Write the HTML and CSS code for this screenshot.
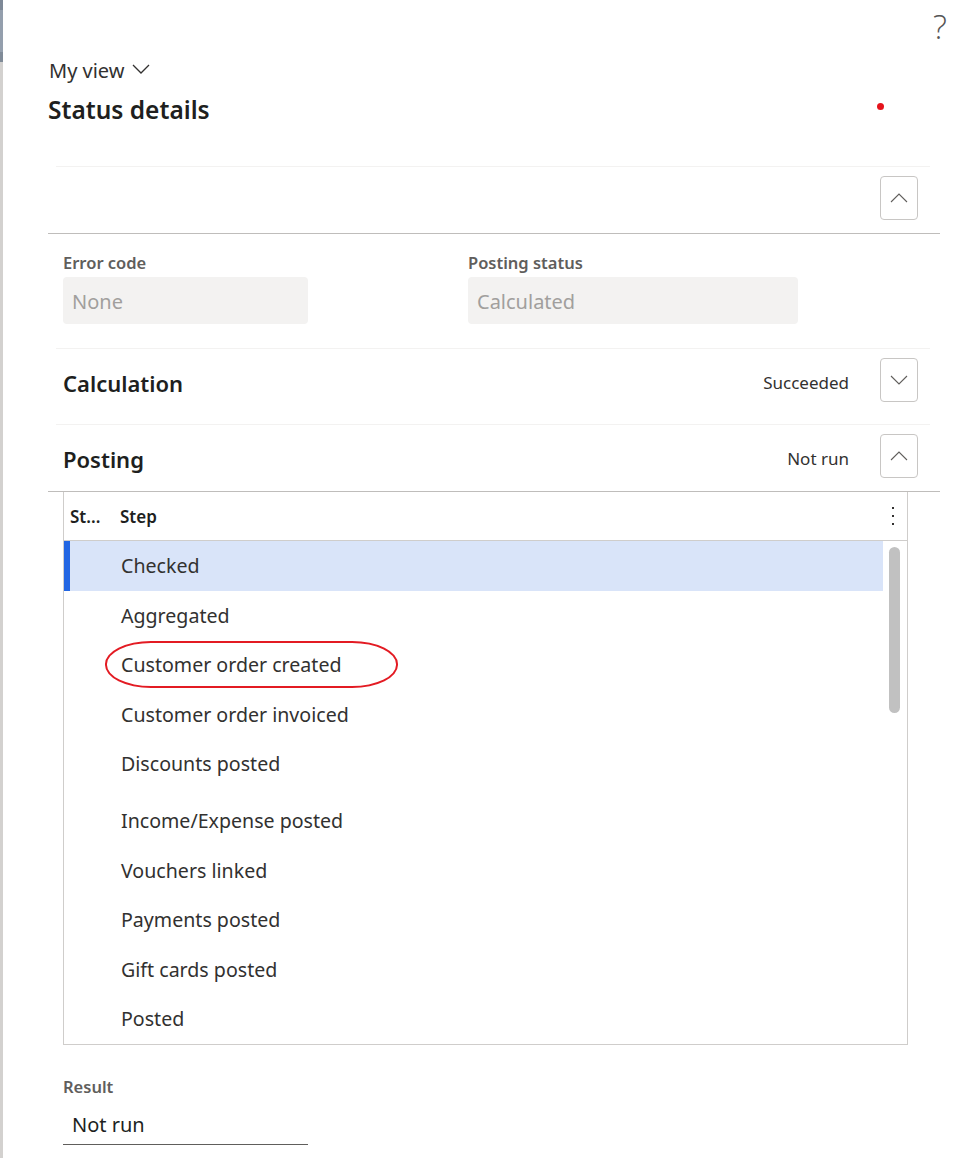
FILE: index.html
```html
<!DOCTYPE html>
<html lang="en">
<head>
<meta charset="utf-8">
<title>Status details</title>
<link rel="stylesheet" href="styles.css">
</head>
<body>
<div class="page">
  <div class="strip">
    <div class="strip-top"></div>
  </div>
  <main class="main">
    <div class="helprow"><span class="help">?</span></div>
    <div class="myview">My view
      <svg class="myview-chev" width="18" height="12" viewBox="0 0 18 12"><polyline points="1,2 9,10 17,2" fill="none" stroke="#323130" stroke-width="1.3"/></svg>
    </div>
    <div class="titlerow">
      <h1 class="title">Status details</h1>
      <span class="reddot"></span>
    </div>

    <div class="divider-light"></div>
    <div class="tabhead tabhead-open">
      <span class="tabtitle"></span>
      <button class="chevbtn"><svg width="18" height="12" viewBox="0 0 18 12"><polyline points="1,10 9,2 17,10" fill="none" stroke="#605e5c" stroke-width="1.1"/></svg></button>
    </div>
    <div class="divider-dark"></div>

    <div class="fields">
      <div class="field field-a">
        <div class="label">Error code</div>
        <div class="input">None</div>
      </div>
      <div class="field field-b">
        <div class="label">Posting status</div>
        <div class="input">Calculated</div>
      </div>
    </div>

    <div class="divider-light"></div>
    <div class="tabhead tabhead-closed">
      <span class="tabtitle">Calculation</span>
      <span class="tabstatus">Succeeded</span>
      <button class="chevbtn"><svg width="18" height="12" viewBox="0 0 18 12"><polyline points="1,2 9,10 17,2" fill="none" stroke="#605e5c" stroke-width="1.1"/></svg></button>
    </div>
    <div class="divider-light"></div>
    <div class="tabhead tabhead-open">
      <span class="tabtitle">Posting</span>
      <span class="tabstatus">Not run</span>
      <button class="chevbtn"><svg width="18" height="12" viewBox="0 0 18 12"><polyline points="1,10 9,2 17,10" fill="none" stroke="#605e5c" stroke-width="1.1"/></svg></button>
    </div>
    <div class="divider-dark"></div>

    <div class="grid">
      <div class="ghead">
        <span class="gcol-st">St...</span>
        <span class="gcol-step">Step</span>
        <span class="more"><i></i><i></i><i></i></span>
      </div>
      <div class="gbody">
        <div class="rows">
          <div class="row selected">Checked</div>
          <div class="row">Aggregated</div>
          <div class="row annotated">Customer order created<span class="ring"></span></div>
          <div class="row">Customer order invoiced</div>
          <div class="row gap-after">Discounts posted</div>
          <div class="row">Income/Expense posted</div>
          <div class="row">Vouchers linked</div>
          <div class="row">Payments posted</div>
          <div class="row">Gift cards posted</div>
          <div class="row">Posted</div>
        </div>
        <div class="scroll"><div class="thumb"></div></div>
      </div>
    </div>

    <div class="result">
      <div class="label">Result</div>
      <div class="result-value">Not run</div>
    </div>
  </main>
</div>
</body>
</html>
```

FILE: styles.css
```css
* { box-sizing: border-box; }
html, body { margin: 0; padding: 0; background: #ffffff; }
body {
  font-family: "Noto Sans", "Open Sans", sans-serif;
  color: #323130;
  width: 962px;
  height: 1158px;
  overflow: hidden;
}
.page { display: flex; height: 1158px; }
.strip {
  width: 3px;
  flex: none;
  background: #d3d1cf;
}
.strip-top {
  height: 62px;
  background: linear-gradient(to bottom, #7e8997 0, #7e8997 10px, #949fad 10px, #949fad 52px, #808b98 52px);
}
.main {
  flex: 1;
  padding: 0 22px 0 45px;
}
.helprow {
  height: 57px;
  display: flex;
  justify-content: flex-end;
  margin-right: -7px;
}
.help {
  font-family: "Open Sans", "Noto Sans", sans-serif;
  font-weight: 300;
  font-size: 33px;
  line-height: 1;
  color: #555;
  padding-top: 10px;
}
.myview {
  height: 28px;
  line-height: 28px;
  font-size: 20px;
  display: flex;
  align-items: center;
  gap: 8px;
  padding-left: 1px;
}
.myview-chev { margin-top: -4px; }
.titlerow {
  margin-top: 9px;
  height: 32px;
  display: flex;
  align-items: center;
  justify-content: space-between;
}
.title {
  margin: 0;
  font-size: 24.5px;
  line-height: 32px;
  font-weight: 600;
  color: #201f1e;
}
.reddot {
  width: 7px;
  height: 7px;
  border-radius: 50%;
  background: #e5141c;
  margin-right: 56px;
  margin-top: -7px;
}
.divider-light {
  height: 1px;
  background: #f3f2f1;
  margin: 0 10px 0 8px;
}
.titlerow + .divider-light { margin-top: 40px; }
.divider-dark {
  height: 1px;
  background: #bfbdbb;
}
.tabhead {
  display: flex;
  align-items: center;
  padding: 9px 22px 0 15px;
}
.tabhead-open { padding-bottom: 13px; }
.tabhead-closed { padding-bottom: 22px; }
.tabtitle {
  flex: 1;
  font-size: 22px;
  font-weight: 600;
  color: #201f1e;
  padding-top: 5px;
}
.tabstatus {
  font-size: 17px;
  color: #323130;
  margin-right: 31px;
  padding-top: 4px;
}
.chevbtn {
  width: 38px;
  height: 44px;
  border: 1px solid #c8c6c4;
  border-radius: 4px;
  background: #fff;
  display: flex;
  align-items: center;
  justify-content: center;
  padding: 0;
}
.fields {
  display: flex;
  padding: 18px 0 24px 15px;
}
.field-a { width: 405px; }
.field-a .input { width: 245px; }
.field-b .input { width: 330px; }
.label {
  font-size: 16.5px;
  line-height: 22px;
  font-weight: 600;
  color: #605e5c;
}
.input {
  margin-top: 3px;
  height: 47px;
  border-radius: 4px;
  background: #f3f2f1;
  color: #a19f9d;
  font-size: 20px;
  line-height: 47px;
  padding: 3px 0 0 9px;
}
.input { line-height: 44px; }
.grid {
  margin-left: 15px;
  width: 845px;
  border: 1px solid #cfcdcb;
  border-top: none;
}
.ghead {
  height: 49px;
  border-bottom: 1px solid #cfcdcb;
  display: flex;
  align-items: center;
  font-size: 17px;
  font-weight: 600;
  color: #201f1e;
}
.gcol-st { width: 56px; padding-left: 6px; }
.gcol-step { flex: 1; }
.more {
  width: 15px;
  display: flex;
  flex-direction: column;
  align-items: flex-start;
  gap: 6px;
}
.more i {
  display: block;
  width: 2px;
  height: 2px;
  background: #323130;
}
.gbody { display: flex; }
.rows { width: 819px; }
.row {
  height: 49.5px;
  line-height: 49.5px;
  font-size: 19.6px;
  padding-left: 57px;
  color: #323130;
  position: relative;
}
.row.selected {
  background: #d9e4f9;
  box-shadow: inset 6px 0 0 #2266e3;
}
.row.gap-after { margin-bottom: 7.5px; }
.ring {
  position: absolute;
  left: 41px;
  top: 1px;
  width: 293px;
  height: 47px;
  border: 2px solid #e31b23;
  border-radius: 46px / 23px;
}
.scroll {
  flex: 1;
  padding: 6px 0 0 6px;
}
.thumb {
  width: 11px;
  height: 166px;
  border-radius: 6px;
  background: #c1c1c1;
}
.result {
  padding: 31px 0 0 15px;
}
.result-value {
  margin-top: 4px;
  width: 245px;
  height: 43px;
  line-height: 40px;
  padding-top: 3px;
  font-size: 20px;
  padding-left: 9px;
  border-bottom: 1px solid #605e5c;
  color: #201f1e;
}
```
